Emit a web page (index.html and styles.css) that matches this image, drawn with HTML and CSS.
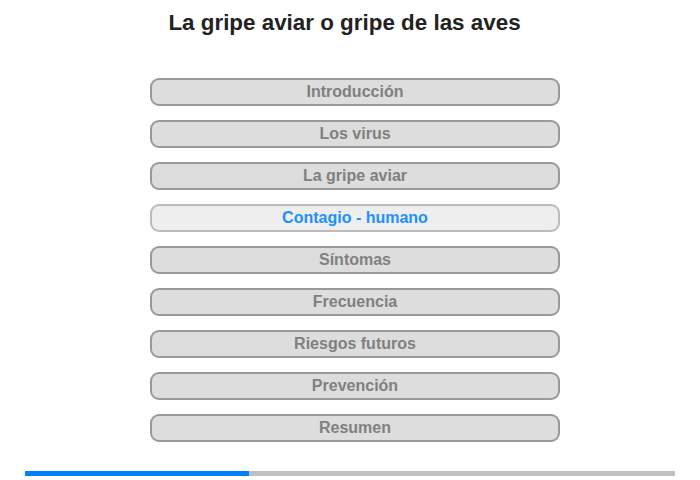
FILE: index.html
```html
<!DOCTYPE html>
<html lang="es">
<head>
  <meta charset="UTF-8" />
  <meta name="viewport" content="width=device-width, initial-scale=1.0"/>
  <title>La gripe aviar</title>
  <link rel="stylesheet" href="styles.css">
</head>
<body>

  <h1 class="title">La gripe aviar o gripe de las aves</h1>

  <nav class="menu">
    <a class="menu-item" href="#">Introducción</a>
    <a class="menu-item" href="#">Los virus</a>
    <a class="menu-item" href="#">La gripe aviar</a>
    <a class="menu-item active" href="#">Contagio - humano</a>
    <a class="menu-item" href="#">Síntomas</a>
    <a class="menu-item" href="#">Frecuencia</a>
    <a class="menu-item" href="#">Riesgos futuros</a>
    <a class="menu-item" href="#">Prevención</a>
    <a class="menu-item" href="#">Resumen</a>
  </nav>

  <div class="progress">
    <div class="progress-fill" style="width: 224px"></div>
  </div>

</body>
</html>
```

FILE: styles.css
```css
body {
  font-family: Arial, "Liberation Sans", sans-serif;
  margin: 0;
  padding: 0;
  background-color: #fff;
  color: #222;
}
.title {
  margin: 10px 0 0;
  padding-right: 11px;
  font-size: 22.4px;
  line-height: 25px;
  font-weight: bold;
  text-align: center;
  color: #222;
}
.menu {
  display: flex;
  flex-direction: column;
  gap: 14px;
  width: 410px;
  margin: 43px 0 0 150px;
}
.menu-item {
  display: block;
  height: 24px;
  line-height: 24px;
  border: 2px solid #999;
  border-radius: 9px;
  background-color: #ddd;
  color: #808080;
  font-size: 16px;
  font-weight: bold;
  text-align: center;
  text-decoration: none;
}
.menu-item.active {
  background-color: #eee;
  border-color: #bbb;
  color: #1e90ff;
}
.progress {
  width: 650px;
  height: 5px;
  margin: 29px 0 0 25px;
  background-color: #c0c0c0;
}
.progress-fill {
  height: 100%;
  background-color: #0080ff;
}
```
